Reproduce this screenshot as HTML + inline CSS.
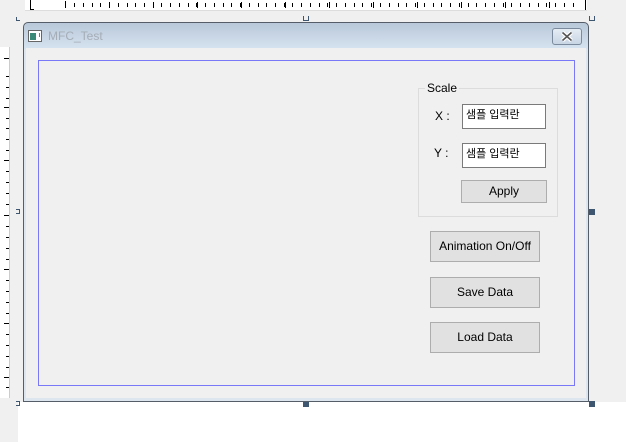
<!DOCTYPE html>
<html><head><meta charset="utf-8"><style>
*{margin:0;padding:0;box-sizing:border-box}
body{width:626px;height:442px;background:#fff;position:relative;overflow:hidden;font-family:"Liberation Sans","Noto Sans CJK KR",sans-serif;font-size:12px;color:#000}
.a{position:absolute}
.btn{position:absolute;background:#e1e1e1;border:1px solid #adadad;text-align:center;font-size:12px}
.ed{position:absolute;background:#fff;border:1px solid #7a7a7a;font-size:11px;padding-left:3px;line-height:20px}
.h{position:absolute;width:6px;height:6px;background:#3e5670}
</style></head><body>
<div class="a" style="left:0;top:0;width:626px;height:442px;background:#f0f0f0"></div>
<div class="a" style="left:18px;top:402px;width:608px;height:40px;background:#fff"></div>
<div class="a" style="left:25px;top:0;width:562px;height:11px;background:#fff;border-bottom:1px solid #ddd"></div>
<svg class="a" style="left:0;top:0" width="626" height="12">
<g stroke="#000" stroke-width="1">
<path d="M30.5 0v10M31 9.5h3"/>
<path d="M65.5 3v4M74.5 3v4M83.5 3v4M92.5 3v4M100.5 3v4M109.5 3v4M118.5 3v4M127.5 3v4M135.5 3v4M144.5 3v4M161.5 3v4M170.5 3v4M179.5 3v4M188.5 3v4M196.5 3v4M205.5 3v4M214.5 3v4M223.5 3v4M231.5 3v4M240.5 3v4M249.5 3v4M258.5 3v4M266.5 3v4M275.5 3v4M284.5 3v4M292.5 3v4M301.5 3v4M310.5 3v4M319.5 3v4M327.5 3v4M336.5 3v4M345.5 3v4M354.5 3v4M362.5 3v4M371.5 3v4M380.5 3v4M389.5 3v4M398.5 3v4M406.5 3v4M415.5 3v4M424.5 3v4M433.5 3v4M441.5 3v4M450.5 3v4M459.5 3v4M468.5 3v4M476.5 3v4M485.5 3v4M494.5 3v4M503.5 3v4M511.5 3v4M520.5 3v4M529.5 3v4M538.5 3v4M546.5 3v4M555.5 3v4M564.5 3v4M573.5 3v4"/>
<path d="M65.5 1v7M109.5 2v6M153.5 2v6M197.5 2v6M241.5 2v6M285.5 2v6M329.5 2v6M373.5 2v6M417.5 2v6M461.5 2v6M505.5 2v6M549.5 2v6"/>
<path d="M585.5 0v10"/>
</g></svg>
<div class="a" style="left:0;top:47px;width:10px;height:351px;background:#fff;border-right:1px solid #ccc"></div>
<svg class="a" style="left:0;top:47px" width="10" height="351">
<g stroke="#000"><path d="M4 11.5h5M6 29.5h3M6 40.5h3M6 51.5h3M4 60.5h5M6 71.5h3M6 81.5h3M6 92.5h3M6 103.5h3M4 113.5h5M6 124.5h3M6 135.5h3M6 146.5h3M6 157.5h3M4 168.5h5M6 179.5h3M6 190.5h3M6 201.5h3M6 212.5h3M4 222.5h5M6 233.5h3M6 244.5h3M6 255.5h3M6 266.5h3M4 276.5h5M6 287.5h3M6 298.5h3M6 309.5h3M6 320.5h3M4 330.5h5M6 340.5h3"/></g></svg>
<div class="a" style="left:16px;top:17px;width:4px;height:4px;border-left:1px solid #3e5670;border-bottom:1px solid #3e5670"></div>
<div class="a" style="left:303px;top:16px;width:6px;height:5px;border:1px solid #3e5670;border-top:none"></div>
<div class="a" style="left:589px;top:16px;width:6px;height:5px;border:1px solid #3e5670;border-top:none"></div>
<div class="a" style="left:16px;top:209px;width:4px;height:5px;border:1px solid #3e5670;border-left:none"></div>
<div class="h" style="left:589px;top:209px"></div>
<div class="a" style="left:16px;top:401px;width:4px;height:5px;border:1px solid #3e5670;border-left:none"></div>
<div class="h" style="left:303px;top:401px"></div>
<div class="h" style="left:589px;top:401px"></div>
<div class="a" style="left:23px;top:22px;width:566px;height:380px;border:1px solid #555d68;border-radius:5px 5px 0 0;background:linear-gradient(#b9c8da,#d6e2ef 26px,#dde6ef 26px)"></div>
<div class="a" style="left:26px;top:48px;width:560px;height:350px;background:#f0f0f0"></div>
<svg class="a" style="left:28px;top:30px" width="14" height="12"><rect x=".5" y=".5" width="13" height="11" fill="#fff" stroke="#666"/><rect x="2" y="3" width="6" height="7" fill="#3b8a78"/><rect x="11" y="3" width="1" height="4" fill="#2a6"/></svg>
<div class="a" style="left:48px;top:29px;font-size:12px;color:#a5adb7">MFC_Test</div>
<div class="a" style="left:552px;top:28px;width:30px;height:17px;border:1px solid #7b8a9c;border-radius:3px;background:linear-gradient(#e5ecf4,#c8d5e4)"></div>
<svg class="a" style="left:561px;top:31px" width="12" height="11"><path d="M1.5 1.5l9 8M10.5 1.5l-9 8" stroke="#fff" stroke-width="4"/><path d="M1.5 1.5l9 8M10.5 1.5l-9 8" stroke="#555" stroke-width="1.6"/></svg>
<svg class="a" style="left:38px;top:60px" width="537" height="326"><rect x=".5" y=".5" width="536" height="325" fill="none" stroke="#0000ff" stroke-dasharray="1 1"/></svg>
<div class="a" style="left:418px;top:88px;width:140px;height:129px;border:1px solid #dcdcdc"></div>
<div class="a" style="left:425px;top:81px;background:#f0f0f0;padding:0 2px">Scale</div>
<div class="a" style="left:435px;top:109px">X :</div>
<div class="a" style="left:434px;top:146px">Y :</div>
<div class="ed" style="left:462px;top:104px;width:84px;height:25px">샘플 입력란</div>
<div class="ed" style="left:462px;top:143px;width:84px;height:25px">샘플 입력란</div>
<div class="btn" style="left:461px;top:180px;width:86px;height:23px;line-height:21px">Apply</div>
<div class="btn" style="left:430px;top:231px;width:110px;height:31px;line-height:29px">Animation On/Off</div>
<div class="btn" style="left:430px;top:277px;width:110px;height:31px;line-height:29px">Save Data</div>
<div class="btn" style="left:430px;top:322px;width:110px;height:31px;line-height:29px">Load Data</div>
</body></html>
